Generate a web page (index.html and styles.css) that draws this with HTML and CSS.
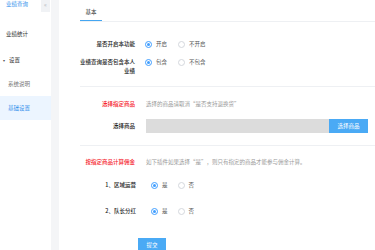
FILE: index.html
```html
<!DOCTYPE html>
<html lang="zh">
<head>
<meta charset="utf-8">
<link rel="stylesheet" href="styles.css">
</head>
<body>
<div class="app">
  <aside class="sidebar">
    <div class="collapse">«</div>
    <ul class="menu">
      <li class="item item-first active-text">业绩查询</li>
      <li class="item item-second">业绩统计</li>
      <li class="item group"><span class="arrow">▾</span>设置</li>
      <li class="item sub muted">系统说明</li>
      <li class="item sub current">基础设置</li>
    </ul>
  </aside>
  <main class="main">
    <div class="tabs"><div class="tab">基本</div></div>

    <section class="section s1">
      <div class="row">
        <div class="label">是否开启本功能</div>
        <div class="controls">
          <span class="opt"><span class="radio on"></span>开启</span>
          <span class="opt"><span class="radio"></span>不开启</span>
        </div>
      </div>
      <div class="row row2">
        <div class="label">业绩查询是否包含本人业绩</div>
        <div class="controls">
          <span class="opt"><span class="radio on"></span>包含</span>
          <span class="opt"><span class="radio"></span>不包含</span>
        </div>
      </div>
    </section>

    <section class="section s2">
      <div class="row">
        <div class="label red">选择指定商品</div>
        <div class="controls hint">选择的商品请取消“是否支持退换货”</div>
      </div>
      <div class="row pick">
        <div class="label">选择商品</div>
        <div class="controls fill">
          <div class="input"></div>
          <button class="btn">选择商品</button>
        </div>
      </div>
    </section>

    <section class="section s3">
      <div class="row">
        <div class="label red">按指定商品计算佣金</div>
        <div class="controls hint">如下插件如果选择“是”，则只有指定的商品才能参与佣金计算。</div>
      </div>
      <div class="row wide r31">
        <div class="label">1、区域运营</div>
        <div class="controls">
          <span class="opt"><span class="radio on"></span>是</span>
          <span class="opt"><span class="radio"></span>否</span>
        </div>
      </div>
      <div class="row wide r32">
        <div class="label">2、队长分红</div>
        <div class="controls">
          <span class="opt"><span class="radio on"></span>是</span>
          <span class="opt"><span class="radio"></span>否</span>
        </div>
      </div>
      <div class="submit-row"><button class="submit">提交</button></div>
    </section>
  </main>
</div>
</body>
</html>
```

FILE: styles.css
```css
* { box-sizing: border-box; }
html, body {
  margin: 0;
  padding: 0;
  background: #fff;
  font-family: "Noto Sans CJK SC", "Noto Sans", sans-serif;
  font-size: 5.5px;
  line-height: 9px;
  color: #333;
  overflow: hidden;
}
.app {
  display: flex;
  height: 250px;
  width: 375px;
  overflow: hidden;
}
.sidebar {
  position: relative;
  width: 59px;
  flex: none;
  background: #fff;
  border-right: 8px solid #f4f5f7;
  overflow: hidden;
}
.collapse {
  position: absolute;
  left: 41px;
  top: 0;
  width: 9px;
  height: 12px;
  background: #f0f2f5;
  color: #b5b9c0;
  font-size: 6px;
  line-height: 10px;
  text-align: center;
}
.menu {
  list-style: none;
  margin: -11px 0 0;
  padding: 0;
}
.item {
  height: 24px;
  line-height: 24px;
  padding-left: 6px;
  color: #333;
  white-space: nowrap;
}
.item-first { height: 30px; line-height: 30px; }
.item-second { height: 29px; line-height: 31px; }
.active-text { color: #3a93ec; }
.group { padding-left: 3px; }
.arrow {
  display: inline-block;
  width: 6px;
  font-size: 4px;
  color: #555;
}
.sub { padding-left: 8px; }
.muted { color: #777; }
.current { background: #ecf5ff; color: #3a93ec; }

.main {
  flex: 1;
  min-width: 0;
  padding: 0 0 0 21px;
}
.tabs {
  height: 22px;
  border-bottom: 1px solid #eef0f3;
  padding-top: 7px;
}
.tab {
  width: 22px;
  height: 14px;
  text-align: center;
  line-height: 10px;
  color: #333;
  border-bottom: 1.5px solid #45a6f1;
}
.section {
  border-bottom: 1px solid #eef0f3;
}
.row {
  display: flex;
  align-items: flex-start;
}
.label {
  width: 55px;
  flex: none;
  text-align: right;
  color: #222;
  font-weight: 500;
}
.red { color: #f5222d; }
.controls {
  margin-left: 10px;
  display: flex;
  align-items: center;
  height: 9px;
  white-space: nowrap;
}
.hint { color: #999; margin-left: 11px; }
.opt {
  display: inline-flex;
  align-items: center;
  margin-right: 11px;
  color: #555;
}
.radio {
  width: 7px;
  height: 7px;
  border: 0.8px solid #d4d7dd;
  border-radius: 50%;
  margin-right: 4px;
  background: #fff;
  position: relative;
}
.radio.on {
  border-color: #409eff;
}
.radio.on::after {
  content: "";
  position: absolute;
  left: 1.4px;
  top: 1.4px;
  width: 3px;
  height: 3px;
  border-radius: 50%;
  background: #409eff;
}
.s1 { padding-top: 18px; padding-bottom: 10px; }
.row2 { margin-top: 9px; }
.s2 { padding-top: 13px; padding-bottom: 12px; }
.pick { margin-top: 10px; align-items: center; margin-right: 7px; }
.fill {
  flex: 1;
  height: 14px;
  margin-left: 11px;
}
.input {
  flex: 1;
  height: 14px;
  background: #dcdcdc;
}
.btn {
  width: 39px;
  flex: none;
  height: 14px;
  border: 0;
  padding: 0;
  margin: 0;
  background: #4aaaf5;
  color: #fff;
  font: inherit;
  line-height: 14px;
}
.s3 { padding-top: 12px; border-bottom: 0; }
.wide .label { width: 56px; }
.wide .controls { margin-left: 15px; }
.wide .opt { margin-right: 10px; }
.r31 { margin-top: 14px; }
.r32 { margin-top: 17px; }
.submit-row { margin-top: 22px; padding-left: 58px; }
.submit {
  width: 28px;
  height: 14px;
  border: 0;
  padding: 0;
  background: #4aaaf5;
  color: #fff;
  font: inherit;
  line-height: 14px;
}
```
